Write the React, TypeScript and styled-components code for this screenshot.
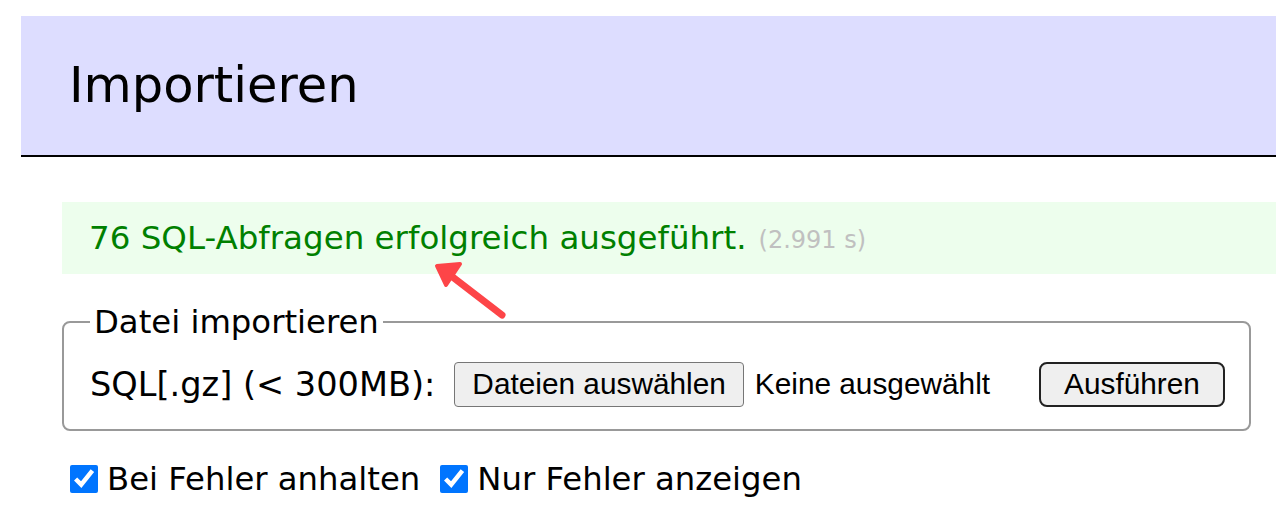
import React from "react";
import styled, { createGlobalStyle } from "styled-components";

const Global = createGlobalStyle`
  html, body { margin: 0; padding: 0; background: #fff; }
  body { font-family: "DejaVu Sans", Verdana, sans-serif; color: #000; }
`;

const Page = styled.div`
  position: relative;
  padding: 16px 0 0 21px;
  width: 1276px;
  height: 532px;
  box-sizing: border-box;
  overflow: hidden;
`;

const Header = styled.h2`
  margin: 0;
  height: 141px;
  box-sizing: border-box;
  display: flex;
  align-items: center;
  padding: 0 0 0 48px;
  background: #ddf;
  border-bottom: 2px solid #000;
  font-size: 49.5px;
  font-weight: normal;
  line-height: 1.2;
`;

const Content = styled.div`
  padding-left: 41px;
`;

const Message = styled.div`
  margin-top: 45px;
  height: 72px;
  display: flex;
  align-items: center;
  padding-left: 27px;
  background: #edfeed;
  color: #008000;
  font-size: 32.5px;
  white-space: nowrap;
`;

const Time = styled.span`
  color: #c0c0c0;
  font-size: 24px;
  margin-left: 12px;
  padding-top: 4px;
`;

const Fieldset = styled.fieldset`
  margin: 29px 25px 0 0;
  padding: 20px 20px 22px 26px;
  border: 2px solid #999;
  border-radius: 8px;
`;

const Legend = styled.legend`
  padding: 0 4px;
  margin-left: 0;
  font-size: 32.3px;
  line-height: 1.2;
`;

const Row = styled.div`
  display: flex;
  align-items: center;
  white-space: nowrap;
  & > * { flex-shrink: 0; }
`;

const Label = styled.span`
  font-size: 33.6px;
  margin-right: 19px;
`;

const Button = styled.button<{ $strong?: boolean }>`
  font-family: "Liberation Sans", Arial, sans-serif;
  font-size: 29.8px;
  height: 45px;
  white-space: nowrap;
  padding: ${(p) => (p.$strong ? "0 23px" : "0 17px")};
  background: #efefef;
  color: #000;
  border: ${(p) => (p.$strong ? "2px solid #222" : "1.5px solid #767676")};
  border-radius: ${(p) => (p.$strong ? "8px" : "4px")};
`;

const FileName = styled.span`
  font-family: "Liberation Sans", Arial, sans-serif;
  font-size: 29.8px;
  margin-left: 11px;
  margin-right: 49px;
`;

const Options = styled.div`
  display: flex;
  align-items: center;
  margin-top: 29px;
  padding-left: 8px;
  white-space: nowrap;
`;

const CheckLabel = styled.label`
  display: flex;
  align-items: center;
  font-size: 32.3px;
  margin-right: 20px;
`;

const Check = styled.input`
  width: 28px;
  height: 28px;
  margin: 0 9px 0 0;
  accent-color: #0075ff;
`;

const Arrow = styled.svg`
  position: absolute;
  left: 420px;
  top: 251px;
  pointer-events: none;
`;

export default function App() {
  return (
    <Page>
      <Global />
      <Header>Importieren</Header>
      <Content>
        <Message>
          76 SQL-Abfragen erfolgreich ausgeführt.<Time>(2.991 s)</Time>
        </Message>
        <Fieldset>
          <Legend>Datei importieren</Legend>
          <Row>
            <Label>SQL[.gz] (&lt; 300MB):</Label>
            <Button>Dateien auswählen</Button>
            <FileName>Keine ausgewählt</FileName>
            <Button $strong>Ausführen</Button>
          </Row>
        </Fieldset>
        <Options>
          <CheckLabel>
            <Check type="checkbox" defaultChecked />
            Bei Fehler anhalten
          </CheckLabel>
          <CheckLabel>
            <Check type="checkbox" defaultChecked />
            Nur Fehler anzeigen
          </CheckLabel>
        </Options>
      </Content>
      <Arrow width="100" height="80" viewBox="0 0 100 80">
        <line x1="82" y1="64" x2="30" y2="24" stroke="#fd4548" strokeWidth="7" strokeLinecap="round" />
        <polygon points="17,15 40,13 26,34" fill="#fd4548" stroke="#fd4548" strokeWidth="4" strokeLinejoin="round" />
      </Arrow>
    </Page>
  );
}
